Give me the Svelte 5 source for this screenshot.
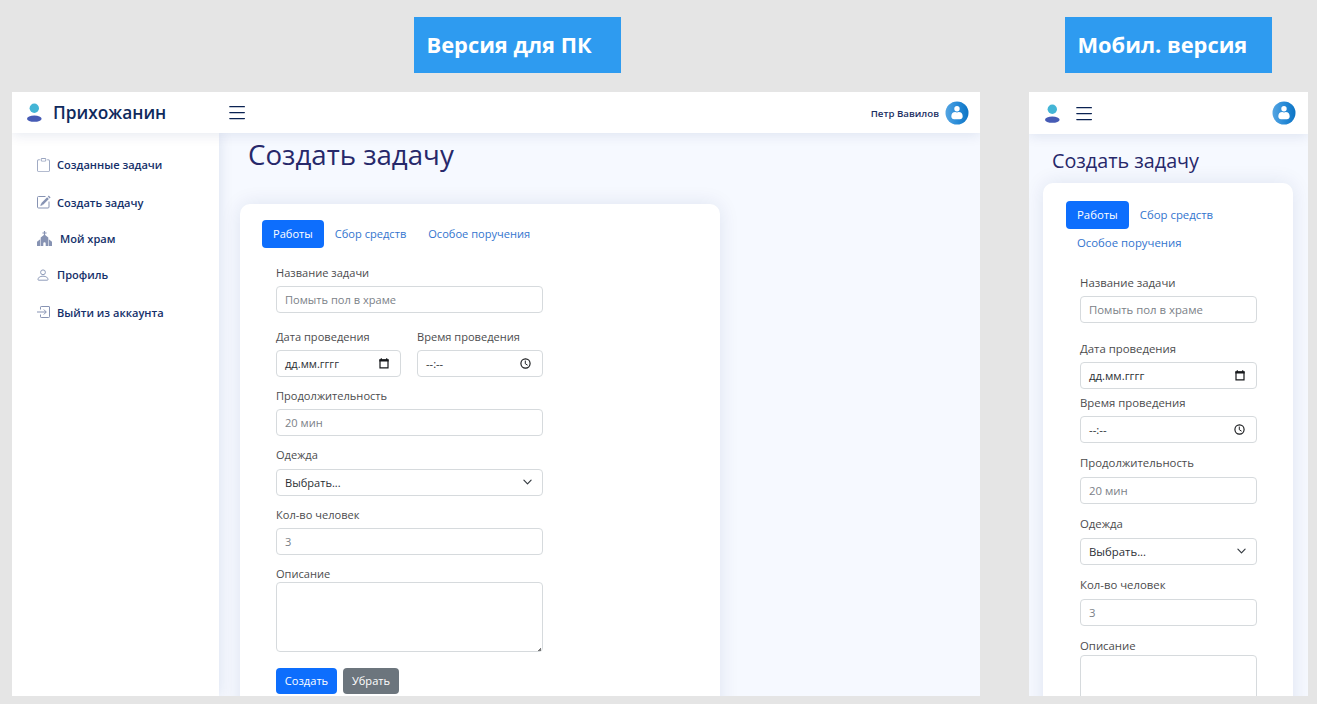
<script>
  const menu = [
    { icon: 'clipboard', text: 'Созданные задачи' },
    { icon: 'pencil', text: 'Создать задачу' },
    { icon: 'church', text: 'Мой храм' },
    { icon: 'person', text: 'Профиль' },
    { icon: 'exit', text: 'Выйти из аккаунта' }
  ];
  const tabs = ['Работы', 'Сбор средств', 'Особое поручения'];
</script>

{#snippet logo()}
  <svg class="logo" viewBox="0 0 16 19" width="16" height="19">
    <circle cx="8.300" cy="5.300" r="4.700" fill="#43b5d6" />
    <ellipse cx="8.300" cy="15.700" rx="7.300" ry="3.100" fill="#465bb5" />
  </svg>
{/snippet}

{#snippet burger()}
  <svg class="burger" viewBox="0 0 16 14" width="16" height="14">
    <path d="M.8.7h14.600M.8 6.600h14.600M.8 12.500h14.600" stroke="#0a2252" stroke-width="1.250" stroke-linecap="round" />
  </svg>
{/snippet}

{#snippet avatar()}
  <svg class="avatar" viewBox="0 0 24 24" width="24" height="24">
    <defs>
      <linearGradient id="av" x1="0" x2="1"><stop offset="0" stop-color="#55a5e2" /><stop offset=".5" stop-color="#2a8cd8" /><stop offset="1" stop-color="#0c74c4" /></linearGradient>
    </defs>
    <circle cx="12" cy="12" r="11.500" fill="url(#av)" />
    <circle cx="12" cy="7.800" r="2.700" fill="#fff" />
    <path d="M6.300 15.300c0-2.800 1.700-4.300 3.900-4.300.9.600 2.700.6 3.600 0 2.200 0 3.900 1.500 3.900 4.300 0 2-1.200 2.900-2.800 2.900H9.100c-1.600 0-2.800-.9-2.800-2.900z" fill="#fff" />
  </svg>
{/snippet}

{#snippet menuIcon(name)}
  {#if name === 'clipboard'}
    <svg viewBox="1 0 14 16" width="13" height="14" fill="#9aa5c0" preserveAspectRatio="none">
      <path d="M4 1.500H3a2 2 0 0 0-2 2V14a2 2 0 0 0 2 2h10a2 2 0 0 0 2-2V3.500a2 2 0 0 0-2-2h-1v1h1a1 1 0 0 1 1 1V14a1 1 0 0 1-1 1H3a1 1 0 0 1-1-1V3.500a1 1 0 0 1 1-1h1z" />
      <path d="M9.500 1a.5.5 0 0 1 .5.5v1a.5.5 0 0 1-.5.5h-3a.5.5 0 0 1-.5-.5v-1a.5.5 0 0 1 .5-.5zm-3-1A1.500 1.500 0 0 0 5 1.500v1A1.500 1.500 0 0 0 6.500 4h3A1.500 1.500 0 0 0 11 2.500v-1A1.500 1.500 0 0 0 9.500 0z" />
    </svg>
  {:else if name === 'pencil'}
    <svg viewBox="0 0 14 14" width="14" height="14" fill="none" stroke="#8793b3">
      <path d="M8.500 1.500H1.500q-1 0-1 1v9.500q0 1 1 1H11q1 0 1-1V6.500" />
      <path d="M5 9.200 11 3.200" stroke-width="2.500" />
      <path d="M11.700 2.500 12.700 1.500" stroke-width="2.500" />
      <path d="M3.300 10.900 4.100 8.300 5.900 10.100z" fill="#8793b3" stroke="none" />
    </svg>
  {:else if name === 'church'}
    <svg viewBox="0 0 15 15" width="15" height="15" fill="#8793b3">
      <path d="M6.900 0h1.200v1.400h1.500v1.200H8.100v1.500l3.200 2.400V15H8.700v-2.500a1.200 1.200 0 0 0-2.400 0V15H3.700V6.500l3.200-2.400V2.600H5.400V1.400h1.500z" />
      <path d="M3.200 8.300V15H0v-4.300zM11.800 8.300 15 10.700V15h-3.200z" />
    </svg>
  {:else if name === 'person'}
    <svg viewBox="0 0 12 12" width="12" height="12" fill="none" stroke="#8f9cba">
      <circle cx="6" cy="3.300" r="2.400" />
      <path d="M1 10.700c0-2.200 1.800-3.500 5-3.500s5 1.300 5 3.500q0 .5-.6.5H1.600q-.6 0-.6-.5z" />
    </svg>
  {:else}
    <svg viewBox="0 0 14 12" width="14" height="12" fill="none" stroke="#8793b3">
      <path d="M3.500 3.500V1.200q0-.7.7-.7h7.800q.5 0 .5.500v9.700q0 .8-.8.800H4.200q-.7 0-.7-.700V8.500" />
      <path d="M0 6h9M6.800 3.500 9.300 6 6.800 8.500" />
    </svg>
  {/if}
{/snippet}

{#snippet calendar()}
  <svg viewBox="0 0 10 11" width="10" height="11">
    <path d="M1 2h8v7.900H1z" fill="none" stroke="#16181b" stroke-width="1.200" />
    <path d="M.4 1.300h9.200v2.200H.4zM1.700.2h1.200v1.500H1.700zM7.100.2h1.200v1.500H7.100z" fill="#16181b" />
  </svg>
{/snippet}

{#snippet clock()}
  <svg viewBox="0 0 11 11" width="11" height="11" fill="none" stroke="#16181b">
    <circle cx="5.500" cy="5.500" r="4.600" stroke-width="1.150" />
    <path d="M5.300 2.600v3.100l2.300 1.500" stroke-width=".95" />
  </svg>
{/snippet}

{#snippet taskForm(withButtons)}
  <nav class="tabs">
    {#each tabs as tab, i}
      <span class="tab" class:active={i === 0}>{tab}</span>
    {/each}
  </nav>
  <form class="form">
    <label class="field first"><span>Название задачи</span><input placeholder="Помыть пол в храме" /></label>
    <div class="pair">
      <div class="field date"><span>Дата проведения</span><div class="control">дд.мм.гггг {@render calendar()}</div></div>
      <div class="field"><span>Время проведения</span><div class="control">--:-- {@render clock()}</div></div>
    </div>
    <label class="field"><span>Продолжительность</span><input placeholder="20 мин" /></label>
    <div class="field">
      <span>Одежда</span>
      <div class="control select">Выбрать...
        <svg viewBox="0 0 10 6" width="9" height="6" fill="none" stroke="#343a40" stroke-width="1.300" stroke-linecap="round" stroke-linejoin="round"><path d="m1 1 4 4 4-4" /></svg>
      </div>
    </div>
    <label class="field"><span>Кол-во человек</span><input placeholder="3" /></label>
    <label class="field about"><span>Описание</span><textarea></textarea></label>
    {#if withButtons}
      <div class="buttons">
        <button type="button" class="create">Создать</button>
        <button type="button" class="remove">Убрать</button>
      </div>
    {/if}
  </form>
{/snippet}

<div class="board">
  <section class="version pc">
    <h2 class="tag">Версия для ПК</h2>
    <div class="screen">
      <header>
        <div class="brand">{@render logo()}<span>Прихожанин</span></div>
        {@render burger()}
        <div class="user"><span>Петр Вавилов</span>{@render avatar()}</div>
      </header>
      <div class="body">
        <aside>
          {#each menu as item}
            <a class="item {item.icon}" href="#top"><i>{@render menuIcon(item.icon)}</i><span>{item.text}</span></a>
          {/each}
        </aside>
        <main>
          <h1>Создать задачу</h1>
          <div class="card">{@render taskForm(true)}</div>
        </main>
      </div>
    </div>
  </section>

  <section class="version mobile">
    <h2 class="tag">Мобил. версия</h2>
    <div class="screen">
      <header>
        {@render logo()}
        {@render burger()}
        <div class="user">{@render avatar()}</div>
      </header>
      <main>
        <h1>Создать задачу</h1>
        <div class="card">{@render taskForm(false)}</div>
      </main>
    </div>
  </section>
</div>

<style>
  :global(body) { margin: 0; background: #e5e5e5; }
  * { box-sizing: border-box; }
  .board {
    display: flex; gap: 49px; width: 1317px; height: 704px; padding: 17px 9px 8px 12px;
    overflow: hidden; background: #e5e5e5; color: #4c4c4e;
    font-family: "Open Sans", "Noto Sans", sans-serif; white-space: nowrap;
  }
  .version { display: flex; flex-direction: column; gap: 19px; }
  .pc { width: 968px; font-size: 11.080px; }
  .mobile { width: 279px; font-size: 11.370px; }
  .tag {
    width: 207px; height: 56px; margin: 0 0 0 402px; padding-left: 12.500px;
    background: #2e9bf0; color: #fff; font-size: 21.850px; font-weight: 700; line-height: 56px;
  }
  .mobile .tag { margin-left: 36px; }
  .screen { display: flex; flex-direction: column; height: 604px; overflow: hidden; background: #f6f9ff; }
  svg { display: block; flex: none; }

  header {
    position: relative; z-index: 2; display: flex; flex: none; align-items: center; height: 41px;
    background: #fff; box-shadow: 0 2px 12px rgba(1, 41, 112, .1);
  }
  .brand { display: flex; align-items: center; gap: 11px; width: 217px; padding-left: 14px; color: #0f2a5c; font-size: 17.300px; font-weight: 600; }
  .brand span { line-height: 20px; }
  .user { display: flex; align-items: center; gap: 6px; margin-left: auto; padding-right: 11px; color: #1b2f63; font-size: 9.700px; font-weight: 600; }
  .user span { padding-top: 1px; }
  .mobile header { height: 42px; padding-left: 15px; }
  .mobile .burger { margin: 2px 0 0 16px; }
  .mobile .user { padding-right: 12px; }

  .body { display: flex; flex: 1; min-height: 0; }
  aside { width: 207px; padding: 13px 0 0 25px; background: #fff; box-shadow: 0 0 14px rgba(1, 41, 112, .12); }
  .item { display: flex; align-items: center; height: 37px; color: #14306a; font-size: 11.080px; font-weight: 600; text-decoration: none; }
  .item i { width: 20px; }
  .item.pencil { height: 38px; }
  .item.church { height: 35px; }
  .church i { width: 23px; }
  .item.exit { height: 38px; }

  main { flex: 1; min-width: 0; }
  h1 { margin: 0; color: #27286a; font-weight: 400; }
  .pc h1 { height: 71px; padding-left: 29px; font-size: 27.650px; line-height: 42px; }
  .mobile h1 { height: 49px; padding-left: 23px; font-size: 19.750px; line-height: 53px; }
  .card { background: #fff; border-radius: 10px; box-shadow: 0 0 20px rgba(1, 41, 112, .1); }
  .pc .card { width: 480px; height: 560px; margin-left: 21px; padding: 16px 22px; }
  .mobile .card { width: 250px; height: 600px; margin-left: 14px; padding: 18px 23px; }

  .tabs { display: flex; flex-wrap: wrap; }
  .tab { height: 28px; padding: 0 11px; border-radius: 4px; color: #3274ce; line-height: 28px; }
  .tab.active { background: #0d6efd; color: #fff; }

  .form { width: 267px; margin: 15px 0 0 14px; }
  .mobile .form { width: 177px; margin-top: 16px; }
  .field { display: block; height: 59.300px; }
  .field > span { display: block; height: 20px; line-height: 20px; }
  .first { height: 64px; }
  .pair { display: grid; grid-template-columns: 125px 126px; gap: 16px; }
  .pair .field { height: 59px; }
  .mobile .field { height: 61px; }
  .mobile .first { height: 66px; }
  .mobile .pair { grid-template-columns: 1fr; gap: 0; }
  .mobile .date { height: 54px; }
  .mobile .pair .field:last-child { height: 60.300px; }
  input, textarea, .control {
    display: flex; align-items: center; justify-content: space-between; width: 100%; height: 27px;
    margin: 3.400px 0 0; padding: 0 11px 0 8px; border: 1px solid #d6dadd; border-radius: 4px;
    outline: 0; background: #fff; color: #2b3035; font: inherit;
  }
  .select { padding-right: 10px; }
  input::placeholder { color: #7b8187; opacity: 1; }
  .field.about { height: 104.100px; }
  .about > span { height: 18.300px; }
  textarea { height: 70px; margin: 0; resize: none; }
  .pc .about { position: relative; }
  .pc .about::after {
    content: ""; position: absolute; right: 2px; top: 84px; width: 3px; height: 3px;
    background: linear-gradient(135deg, transparent 45%, #777 45%);
  }
  .buttons { display: flex; gap: 6px; }
  button { height: 26px; padding: 0 0 1px; border: 0; border-radius: 4px; color: #fff; font: inherit; }
  .create { width: 61px; background: #0d6efd; }
  .remove { width: 56px; background: #6c757d; }
</style>
